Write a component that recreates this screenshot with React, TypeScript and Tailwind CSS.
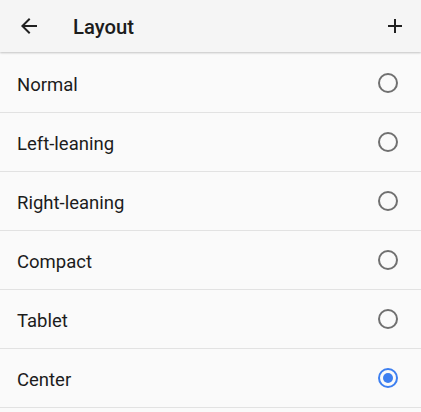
import { useState } from "react";

// ─── Data ────────────────────────────────────────────────────────────────────

const LAYOUTS = ["Normal", "Left-leaning", "Right-leaning", "Compact", "Tablet", "Center"];

// ─── Icons ───────────────────────────────────────────────────────────────────

function ArrowBackIcon() {
  return (
    <svg className="w-6 h-6" viewBox="0 0 24 24" fill="#212121">
      <path d="M20 11H7.83l5.59-5.59L12 4l-8 8 8 8 1.41-1.41L7.83 13H20v-2z" />
    </svg>
  );
}

function AddIcon() {
  return (
    <svg className="w-6 h-6" viewBox="0 0 24 24" fill="#212121">
      <path d="M19 13h-6v6h-2v-6H5v-2h6V5h2v6h6v2z" />
    </svg>
  );
}

function RadioIcon({ checked }: { checked: boolean }) {
  return (
    <svg className="w-6 h-6" viewBox="0 0 24 24" fill="none">
      <circle cx="12" cy="12" r="9" stroke={checked ? "#3d7ff0" : "#707070"} strokeWidth="2" />
      {checked && <circle cx="12" cy="12" r="5" fill="#3d7ff0" />}
    </svg>
  );
}

// ─── Row ─────────────────────────────────────────────────────────────────────

function LayoutRow({ label, checked, onSelect }: { label: string; checked: boolean; onSelect: () => void }) {
  return (
    <div
      className="h-[59px] flex items-center justify-between pl-[17px] pr-[21px] border-b border-[#e2e2e2] cursor-pointer"
      onClick={onSelect}
    >
      <span className="text-[18.5px] leading-none pt-[4px] text-[#1c1c1c]">{label}</span>
      <RadioIcon checked={checked} />
    </div>
  );
}

// ─── App ─────────────────────────────────────────────────────────────────────

export default function App() {
  const [selected, setSelected] = useState("Center");

  return (
    <div className="w-[421px] h-[412px] overflow-hidden bg-[#fafafa]" style={{ fontFamily: "Roboto, 'Noto Sans', sans-serif" }}>
      <div className="relative z-10 h-[52px] flex items-center pl-[17px] pr-[14px] bg-[#f5f5f5] shadow-[0_1px_2px_rgba(0,0,0,0.22)]">
        <ArrowBackIcon />
        <span className="ml-[32px] pt-[2px] text-[20.3px] leading-none font-medium text-[#1c1c1c]">Layout</span>
        <div className="ml-auto">
          <AddIcon />
        </div>
      </div>
      <div className="pt-[2px]">
        {LAYOUTS.map(label => (
          <LayoutRow key={label} label={label} checked={selected === label} onSelect={() => setSelected(label)} />
        ))}
      </div>
    </div>
  );
}
